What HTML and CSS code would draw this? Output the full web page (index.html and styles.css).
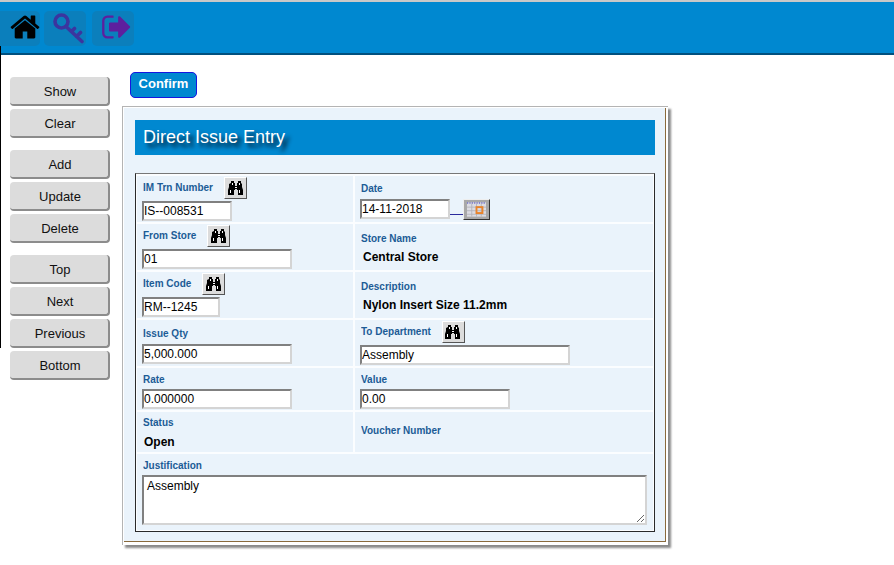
FILE: index.html
```html
<!DOCTYPE html>
<html lang="en">
<head>
<meta charset="utf-8">
<title>Direct Issue Entry</title>
<link rel="stylesheet" href="styles.css">
</head>
<body>
<svg class="defs" width="0" height="0" aria-hidden="true">
  <symbol id="binoc" viewBox="0 0 16 14">
    <path fill="#000" d="M3 0h3v2h1v3h2V2h1V0h3v2l1 1v3l1 3v5H10V9H9V8H7v1H6v5H0V9l1-3V3l2-1z"/>
    <path fill="#fff" d="M2 9h1v3H2zM11 9h1v3h-1zM4 2h1v2H4zM11 2h1v2h-1zM7 6h2v1H7z"/>
  </symbol>
</svg>
<header class="topbar">
  <a class="tile tile-home" href="#"><svg viewBox="0 0 1792 1792" class="ico"><path fill="#000" d="M1472 992v480q0 26-19 45t-45 19h-384v-384h-256v384h-384q-26 0-45-19t-19-45v-480q0-1 .5-3t.5-3l575-474 575 474q1 2 1 6zm223-69l-62 74q-8 9-21 11h-3q-13 0-21-7l-692-577-692 577q-12 8-24 7-13-2-21-11l-62-74q-8-10-7-23.5t11-21.5l719-599q32-26 76-26t76 26l244 204v-195q0-14 9-23t23-9h192q14 0 23 9t9 23v408l219 182q10 8 11 21.5t-7 23.5z"/></svg></a>
  <a class="tile tile-key" href="#"><svg viewBox="0 0 32 32" class="ico"><g fill="none" stroke="#3b359f" stroke-width="3.6" stroke-linecap="round"><circle cx="8.5" cy="9.5" r="6.5"/><path d="M13.5 15L29 29.5M23.5 24.5l4-4M18.5 19.5l3-3"/></g></svg></a>
  <a class="tile tile-out" href="#"><svg viewBox="0 0 1792 1792" class="ico"><path fill="#5e1f9e" d="M704 1440q0 4 1 20t.5 26.5-3 23.5-10 19.5-20.5 6.5h-320q-119 0-203.5-84.5t-84.5-203.5v-704q0-119 84.5-203.5t203.5-84.5h320q13 0 22.5 9.5t9.5 22.5q0 4 1 20t.5 26.5-3 23.5-10 19.5-20.5 6.5h-320q-66 0-113 47t-47 113v704q0 66 47 113t113 47h312l11.5 1 11.5 3 8 5.5 7 9 2 13.5zm928-544q0 26-19 45l-544 544q-19 19-45 19t-45-19-19-45v-288h-448q-26 0-45-19t-19-45v-384q0-26 19-45t45-19h448v-288q0-26 19-45t45-19 45 19l544 544q19 19 19 45z"/></svg></a>
</header>
<div class="page">
  <nav class="side">
    <div class="group">
      <button class="act">Show</button>
      <button class="act">Clear</button>
    </div>
    <div class="group">
      <button class="act">Add</button>
      <button class="act">Update</button>
      <button class="act">Delete</button>
    </div>
    <div class="group">
      <button class="act">Top</button>
      <button class="act">Next</button>
      <button class="act">Previous</button>
      <button class="act">Bottom</button>
    </div>
  </nav>
  <main class="main">
    <button class="confirm">Confirm</button>
    <section class="panel">
      <div class="panel-in">
        <h1 class="title">Direct Issue Entry</h1>
        <div class="form">
          <div class="cell">
            <div class="lab-row"><label class="lab">IM Trn Number</label><button class="find"><svg class="bi"><use href="#binoc"/></svg></button></div>
            <input class="inp w90" value="IS--008531">
          </div>
          <div class="cell">
            <label class="lab d1">Date</label>
            <div class="date-row"><input class="inp w90" value="14-11-2018"><a class="dash" href="#"></a><button class="cal"><svg viewBox="0 0 20 16" class="cal-i"><rect width="20" height="16" fill="#a8a8a8"/><rect x="2" y="2" width="16" height="12" fill="#dcdce2"/><path d="M2 2.5h16" stroke="#3a3ac0" stroke-dasharray="1 1"/><path d="M2 6h16M2 9h16M2 12h16M6 3v11M10 3v11M14 3v11" stroke="#b0b0b8" stroke-width=".7"/><rect x="10" y="6" width="5" height="5" fill="none" stroke="#e8832a" stroke-width="1.6"/></svg></button></div>
          </div>
          <div class="cell">
            <div class="lab-row"><label class="lab">From Store</label><button class="find"><svg class="bi"><use href="#binoc"/></svg></button></div>
            <input class="inp w150" value="01">
          </div>
          <div class="cell">
            <label class="lab d2">Store Name</label>
            <div class="val">Central Store</div>
          </div>
          <div class="cell">
            <div class="lab-row"><label class="lab">Item Code</label><button class="find"><svg class="bi"><use href="#binoc"/></svg></button></div>
            <input class="inp w78" value="RM--1245">
          </div>
          <div class="cell">
            <label class="lab d2">Description</label>
            <div class="val">Nylon Insert Size 11.2mm</div>
          </div>
          <div class="cell">
            <label class="lab s1">Issue Qty</label>
            <input class="inp w150" value="5,000.000">
          </div>
          <div class="cell">
            <div class="lab-row"><label class="lab">To Department</label><button class="find"><svg class="bi"><use href="#binoc"/></svg></button></div>
            <input class="inp w210" value="Assembly">
          </div>
          <div class="cell">
            <label class="lab s2">Rate</label>
            <input class="inp w150" value="0.000000">
          </div>
          <div class="cell">
            <label class="lab s2">Value</label>
            <input class="inp w150" value="0.00">
          </div>
          <div class="cell">
            <label class="lab s3">Status</label>
            <div class="val vs">Open</div>
          </div>
          <div class="cell mid">
            <label class="lab">Voucher Number</label>
          </div>
          <div class="cell wide">
            <label class="lab s4">Justification</label>
            <textarea class="area">Assembly</textarea>
          </div>
        </div>
      </div>
    </section>
  </main>
</div>
</body>
</html>
```
FILE: styles.css
```css
* { box-sizing: border-box; }
html, body { margin: 0; padding: 0; }
body {
  position: relative;
  width: 894px;
  height: 565px;
  overflow: hidden;
  background: #fff;
  font-family: "Liberation Sans", Arial, sans-serif;
}
body::before {
  content: "";
  position: absolute;
  left: 0;
  top: 46px;
  width: 1px;
  height: 302px;
  background: #000;
}
.defs { position: absolute; }

.topbar {
  height: 55px;
  display: flex;
  align-items: flex-start;
  gap: 4px;
  padding-top: 9px;
  background: #0088d0;
  border-top: 2px solid #c8c8c8;
  border-bottom: 2px solid #01507e;
}
.tile {
  display: flex;
  align-items: center;
  justify-content: center;
  height: 35px;
  background: #0b7fbc;
  border-radius: 5px;
}
.tile-home { width: 40px; padding: 0 0 4px 10px; border-radius: 0 5px 5px 0; }
.tile-key { width: 42px; padding: 0 0 1px 7px; }
.tile-out { width: 42px; margin-left: 2px; padding: 0 0 4px 8px; }
.ico { width: 32px; height: 32px; display: block; flex: none; }

.page { display: flex; }
.side {
  width: 122px;
  padding: 22px 0 0 10px;
  display: flex;
  flex-direction: column;
  gap: 12px;
  flex: none;
}
.group { display: flex; flex-direction: column; gap: 3px; }
.act {
  width: 100px;
  height: 29px;
  padding: 2px 0 0 2px;
  font: 13px "Liberation Sans", Arial, sans-serif;
  color: #111;
  background: #dcdcdc;
  border: 0;
  border-right: 2px solid #8c8c8c;
  border-bottom: 2px solid #8c8c8c;
  border-radius: 4px;
}

.main { flex: none; width: 560px; padding-top: 17px; }
.confirm {
  display: block;
  width: 67px;
  height: 26px;
  margin-left: 8px;
  padding: 0 0 3px;
  font: bold 13px "Liberation Sans", Arial, sans-serif;
  color: #fff;
  background: #0088d0;
  border: 1px solid #1616e0;
  border-radius: 5px;
}
.panel {
  width: 546px;
  height: 439px;
  margin-top: 8px;
  padding: 1px 2px 3px 1px;
  background: #fff;
  border-top: 1px solid #b4b4b4;
  border-left: 1px solid #b4b4b4;
  box-shadow: 3px 3px 2px #8a8a8a;
}
.panel-in {
  height: 100%;
  padding: 12px 10px 0 11px;
  background: #eaf3fb;
  border-right: 1px solid #8a6a3c;
  border-bottom: 1px solid #8a6a3c;
}
.title {
  height: 35px;
  margin: 0;
  padding: 6px 0 0 8px;
  font-size: 18px;
  line-height: 23px;
  font-weight: normal;
  color: #fff;
  background: #0088d0;
  text-shadow: 4px 4px 4px #001020;
}
.form {
  display: grid;
  grid-template-columns: 216px 298px;
  grid-template-rows: 46px 46px 46px 46px 42px 40px 76px;
  gap: 2px;
  width: 520px;
  height: 359px;
  margin-top: 18px;
  padding: 2px 1px 1px;
  background: #fbfdff;
  border: 1px solid #2a2a2a;
  border-top-color: #777;
}
.cell { background: #eaf3fb; padding: 0 5px; min-width: 0; }
.wide { grid-column: 1 / span 2; }
.mid { display: flex; align-items: center; padding-bottom: 2px; }
.lab-row { display: flex; align-items: center; height: 25px; padding: 1px 0 2px; }
.lab {
  display: block;
  padding-left: 1px;
  font-size: 10px;
  line-height: 12px;
  font-weight: bold;
  color: #1c5c96;
  white-space: nowrap;
  transform: scaleY(1.15);
}
.d1 { padding-top: 6px; height: 23px; }
.d2 { padding-top: 8px; height: 26px; }
.s1 { padding-top: 7px; height: 24px; }
.s2 { padding-top: 5px; height: 21px; }
.s3 { padding-top: 5px; height: 23px; }
.s4 { padding-top: 5px; height: 21px; }
.find {
  width: 23px;
  height: 22px;
  margin-left: 11px;
  padding: 0;
  display: flex;
  align-items: center;
  justify-content: center;
  background: #dcdcdc;
  border: 1px solid;
  border-color: #fff #555 #555 #fff;
}
.bi { width: 16px; height: 14px; display: block; }
.inp {
  display: block;
  height: 20px;
  padding: 0;
  font: 12px "Liberation Sans", Arial, sans-serif;
  color: #000;
  background: #fff;
  border: 2px solid;
  border-color: #808080 #d4d4d4 #d4d4d4 #808080;
  border-radius: 0;
  outline: 0;
}
.w78 { width: 78px; }
.w90 { width: 90px; }
.w150 { width: 150px; }
.w210 { width: 210px; }
.date-row { display: flex; align-items: flex-start; }
.dash {
  width: 13px;
  height: 16px;
  border-bottom: 1px solid #2a2a9c;
}
.cal {
  width: 27px;
  height: 21px;
  padding: 0;
  background: #a8a8a8;
  border: 1px solid;
  border-color: #eee #333 #333 #eee;
}
.cal-i { width: 100%; height: 100%; display: block; }
.val {
  padding: 0 0 0 3px;
  font-size: 12px;
  line-height: 14px;
  font-weight: bold;
  color: #000;
}
.vs { padding-left: 2px; }
.area {
  display: block;
  width: 505px;
  height: 50px;
  padding: 2px 2px 2px 3px;
  font: 12px "Liberation Sans", Arial, sans-serif;
  color: #000;
  background: #fff;
  border: 2px solid;
  border-color: #808080 #d4d4d4 #d4d4d4 #808080;
  outline: 0;
}
```
